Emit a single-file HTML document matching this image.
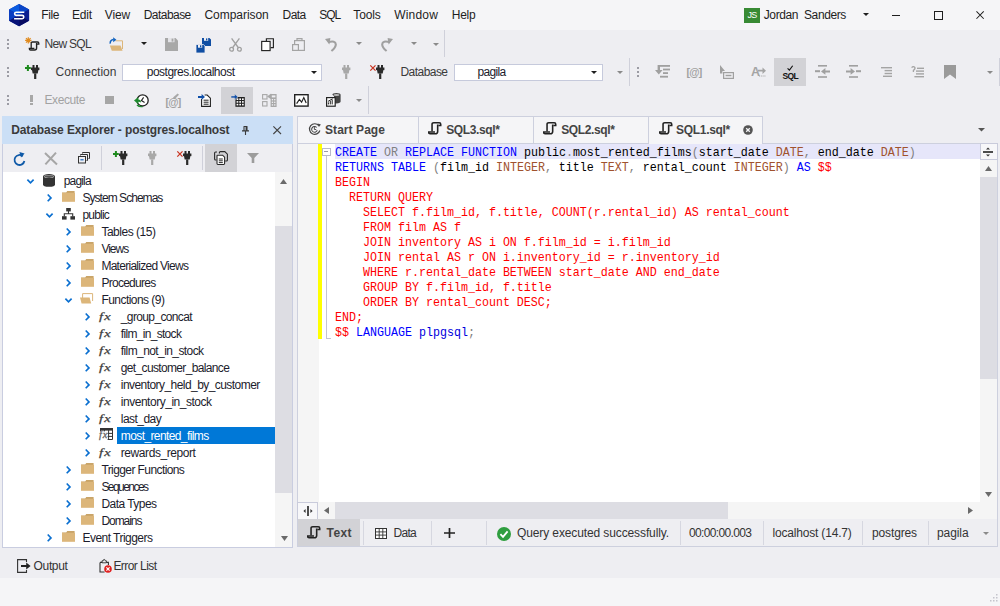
<!DOCTYPE html>
<html><head><meta charset="utf-8"><title>dbForge Studio</title>
<style>
*{box-sizing:border-box;margin:0;padding:0}
html,body{width:1000px;height:606px;overflow:hidden;background:#eeeef2;font-family:"Liberation Sans",sans-serif;font-size:12px;color:#1e1e1e}
.abs{position:absolute}
.t{position:absolute;white-space:pre;line-height:16px;height:16px;font-size:12px;color:#1e1e1e}
svg{position:absolute;overflow:visible}
.grip i{position:absolute;left:0;width:2px;height:2px;background:#9c9ca4}
.grip{position:absolute;width:2px;height:10px}
.grip i:nth-child(1){top:0}.grip i:nth-child(2){top:4px}.grip i:nth-child(3){top:8px}
.vsep{position:absolute;width:1px;background:#cfd0da}
.code{position:absolute;left:335px;font-family:"Liberation Mono",monospace;font-size:11.67px;white-space:pre;line-height:15px;height:15px;color:#000;transform:scaleY(1.1);transform-origin:0 10.6px}
.k{color:#0000ff}.k2{color:#0000dd}.g{color:#808080}.r{color:#ff0000}.ty{color:#a0522d}
.m{color:#1e1e1e}
.gt{color:#9b9b9b}
.tr{color:#1c1c2c}
</style></head><body>
<!-- TITLE / MENU -->
<div class="abs" style="left:0;top:0;width:1000px;height:30px;background:#f5f5f7"></div>
<svg style="left:9px;top:3.7px" width="20.2" height="22.2" viewBox="0 0 20 22.2">
 <path d="M10 0L20 5.5V16.7L10 22.2L0 16.7V5.5Z" fill="#0a2ea8"/>
 <path d="M10 0L0 5.5L10 11.1Z" fill="#0b5be0"/><path d="M10 0L20 5.5L10 11.1Z" fill="#0a46c8"/>
 <path d="M0 5.5V16.7L10 11.1Z" fill="#0a3ec2"/><path d="M20 5.5V16.7L10 11.1Z" fill="#0c1e90"/>
 <path d="M0 16.7L10 22.2V11.1Z" fill="#0a1478"/><path d="M20 16.7L10 22.2V11.1Z" fill="#080c62"/>
 <path d="M15.2 8.2H7.2Q5.5 8.2 5.5 9.8Q5.5 11.4 7.2 11.4H13Q14.7 11.4 14.7 13Q14.7 14.7 13 14.7H5" fill="none" stroke="#fff" stroke-width="1.6"/>
</svg>
<span class="t" style="left:41.25px;top:6.84px;letter-spacing:-0.398px;">File</span>
<span class="t" style="left:72.00px;top:6.84px;letter-spacing:-0.234px;">Edit</span>
<span class="t" style="left:104.80px;top:6.84px;letter-spacing:-0.149px;">View</span>
<span class="t" style="left:143.75px;top:6.84px;letter-spacing:-0.547px;">Database</span>
<span class="t" style="left:204.50px;top:6.84px;letter-spacing:-0.045px;">Comparison</span>
<span class="t" style="left:282.50px;top:6.84px;letter-spacing:-0.527px;">Data</span>
<span class="t" style="left:319.25px;top:6.84px;letter-spacing:-1.089px;">SQL</span>
<span class="t" style="left:353.25px;top:6.84px;letter-spacing:-0.103px;">Tools</span>
<span class="t" style="left:394.25px;top:6.84px;letter-spacing:0.177px;">Window</span>
<span class="t" style="left:451.75px;top:6.84px;letter-spacing:-0.234px;">Help</span>
<div class="abs" style="left:744px;top:7.5px;width:16px;height:15.5px;background:#388a34"></div>
<span class="t" style="left:747.50px;top:7.38px;letter-spacing:-0.758px;font-size:9px;color:#fff">JS</span>
<span class="t" style="left:763.75px;top:6.84px;letter-spacing:-0.388px;">Jordan&nbsp; Sanders</span>
<svg style="left:862.5px;top:13px" width="6" height="3" viewBox="0 0 6 3"><path d="M0 0H6L3 3Z" fill="#1e1e1e"/></svg>
<div class="abs" style="left:892px;top:15px;width:8.4px;height:1px;background:#1e1e1e"></div>
<div class="abs" style="left:934px;top:11.2px;width:8.6px;height:8.6px;border:1px solid #1e1e1e"></div>
<svg style="left:976.2px;top:11.3px" width="8.2" height="8.2" viewBox="0 0 9 9"><path d="M0.5 0.5L8.5 8.5M8.5 0.5L0.5 8.5" stroke="#1e1e1e" stroke-width="1.1"/></svg>
<!--TOOLBARS-->
<!-- row1 -->
<div class="grip" style="left:7px;top:38.5px"><i></i><i></i><i></i></div>
<svg style="left:25px;top:37px" width="15" height="14" viewBox="0 0 15 14">
 <g stroke="#e08a1e" stroke-width="1.2"><path d="M3.3 0.2V6.6M0.1 3.4H6.5M1 1.1L5.6 5.7M5.6 1.1L1 5.7"/></g>
 <path d="M6.2 11V6.2Q6.2 5 7.4 5H12.6Q13.8 5 13.8 6.2V7.2H11.8" fill="none" stroke="#222" stroke-width="1.3"/>
 <path d="M11.6 6V11Q11.6 13 9.6 13H5.6Q4.4 13 4.4 11.9V11.4H9.4" fill="none" stroke="#222" stroke-width="1.4"/>
</svg>
<span class="t" style="left:44.50px;top:35.84px;letter-spacing:-0.694px;color:#3a3a3a">New SQL</span>
<svg style="left:109px;top:37px" width="15" height="15" viewBox="0 0 15 15">
 <path d="M6.5 3.8H13.5V12" fill="none" stroke="#dcb67a" stroke-width="1"/>
 <path d="M0.8 8.6H11.5L13.6 13.8H2.8Z" fill="#dcb67a"/>
 <path d="M1.2 6.6Q1 3 4.6 2.6" fill="none" stroke="#1565c0" stroke-width="1.5"/>
 <path d="M4.2 0.2L7.4 2.7L4.2 5.2Z" fill="#1565c0"/>
</svg>
<svg style="left:141px;top:42px" width="6" height="3" viewBox="0 0 6 3"><path d="M0 0H6L3 3Z" fill="#1e1e1e"/></svg>
<svg style="left:164.5px;top:38px" width="13" height="13" viewBox="0 0 13 13">
 <path d="M0 0H10.5L13 2.5V13H0Z" fill="#a8a8a8"/><rect x="3" y="0" width="6.5" height="4.2" fill="#e4e4e8"/><rect x="6.6" y="0.6" width="1.8" height="3" fill="#a8a8a8"/>
</svg>
<svg style="left:195.5px;top:37.5px" width="15" height="15" viewBox="0 0 15 15">
 <path d="M6 0H13.4L15 1.6V8H6Z" fill="#0f4ea3"/><rect x="8" y="0" width="4.2" height="2.8" fill="#eeeef2"/><rect x="10" y="0.4" width="1.3" height="2" fill="#0f4ea3"/>
 <path d="M0 6.5H7.4L9 8.1V15H0Z" fill="#0f4ea3" stroke="#eeeef2" stroke-width="0.8"/><rect x="2" y="6.9" width="4.2" height="2.8" fill="#eeeef2"/><rect x="4" y="7.3" width="1.3" height="2" fill="#0f4ea3"/>
</svg>
<svg style="left:228.5px;top:37.5px" width="13" height="14" viewBox="0 0 13 14">
 <g fill="none" stroke="#a0a0a0" stroke-width="1.3"><path d="M2.6 0.3L9.6 10M10.4 0.3L3.4 10"/><circle cx="2.6" cy="11.3" r="1.9"/><circle cx="10.4" cy="11.3" r="1.9"/></g>
</svg>
<svg style="left:260.5px;top:37.5px" width="13" height="13" viewBox="0 0 13 13">
 <g fill="none" stroke="#222" stroke-width="1.15"><path d="M5.4 3V0.7H12.4V9.6H9.6"/><rect x="0.7" y="3.4" width="8.4" height="9.2" fill="#fff"/></g>
</svg>
<svg style="left:291.5px;top:37.5px" width="13" height="13" viewBox="0 0 13 13">
 <g fill="none" stroke="#a4a4a4" stroke-width="1.2"><rect x="2.6" y="2.6" width="9.8" height="9.8"/><path d="M5 2.6V0.6H10V2.6"/><rect x="0.6" y="6.6" width="5.8" height="5.8" fill="#eeeef2"/></g>
</svg>
<svg style="left:324.5px;top:37.5px" width="13" height="14" viewBox="0 0 13 14">
 <path d="M3 4.2Q10.6 2 10.8 6.4Q10.8 9.4 6.4 13" fill="none" stroke="#a0a0a0" stroke-width="2.1"/><path d="M0 1L5.4 0L4.4 6.4Z" fill="#a0a0a0"/>
</svg>
<svg style="left:356px;top:42px" width="6" height="3" viewBox="0 0 6 3"><path d="M0 0H6L3 3Z" fill="#8a8a8a"/></svg>
<svg style="left:380px;top:37.5px" width="13" height="14" viewBox="0 0 13 14">
 <path d="M10 4.2Q2.4 2 2.2 6.4Q2.2 9.4 6.6 13" fill="none" stroke="#a0a0a0" stroke-width="2.1"/><path d="M13 1L7.6 0L8.6 6.4Z" fill="#a0a0a0"/>
</svg>
<svg style="left:411px;top:42px" width="6" height="3" viewBox="0 0 6 3"><path d="M0 0H6L3 3Z" fill="#8a8a8a"/></svg>
<svg style="left:432.5px;top:43px" width="6" height="3" viewBox="0 0 6 3"><path d="M0 0H6L3 3Z" fill="#8a8a8a"/></svg>
<div class="vsep" style="left:444px;top:30px;height:27px"></div>
<!-- row2 -->
<div class="grip" style="left:7px;top:66.5px"><i></i><i></i><i></i></div>
<svg style="left:25px;top:64.7px" width="6" height="6" viewBox="0 0 6 6"><path d="M2.9 0.1V5.9M0 3H5.8" stroke="#1e8a1e" stroke-width="2"/></svg><svg style="left:31.2px;top:64.6px" width="9" height="14" viewBox="0 0 9 14"><g fill="#2a2a2a"><rect x="1.5" y="0" width="2" height="3"/><rect x="5" y="0" width="2" height="3"/><rect x="0" y="2.5" width="8.4" height="2.6"/><path d="M1 5H7.4L6.7 8.6H1.7Z"/><rect x="3.1" y="8.4" width="2.2" height="5.6"/></g></svg>
<span class="t" style="left:55.50px;top:63.84px;letter-spacing:0.028px;color:#3a3a3a">Connection</span>
<div class="abs" style="left:122px;top:63.5px;width:199.5px;height:17px;background:#fff;border:1px solid #c6cadc"></div>
<span class="t" style="left:146.75px;top:63.84px;letter-spacing:-0.499px;color:#1c1c2c">postgres.localhost</span>
<svg style="left:310.5px;top:71px" width="6" height="3" viewBox="0 0 6 3"><path d="M0 0H6L3 3Z" fill="#1e1e1e"/></svg>
<svg style="left:341.6px;top:64.6px" width="9" height="14" viewBox="0 0 9 14"><g fill="#a8a8a8"><rect x="1.5" y="0" width="2" height="3"/><rect x="5" y="0" width="2" height="3"/><rect x="0" y="2.5" width="8.4" height="2.6"/><path d="M1 5H7.4L6.7 8.6H1.7Z"/><rect x="3.1" y="8.4" width="2.2" height="5.6"/></g></svg>
<svg style="left:369.5px;top:64.8px" width="6" height="6" viewBox="0 0 6 6"><path d="M0.3 0.3L5.5 5.7M5.5 0.3L0.3 5.7" stroke="#c8321e" stroke-width="1.2"/></svg><svg style="left:376px;top:64.6px" width="9" height="14" viewBox="0 0 9 14"><g fill="#2a2a2a"><rect x="1.5" y="0" width="2" height="3"/><rect x="5" y="0" width="2" height="3"/><rect x="0" y="2.5" width="8.4" height="2.6"/><path d="M1 5H7.4L6.7 8.6H1.7Z"/><rect x="3.1" y="8.4" width="2.2" height="5.6"/></g></svg>
<span class="t" style="left:400.50px;top:63.84px;letter-spacing:-0.547px;color:#3a3a3a">Database</span>
<div class="abs" style="left:453.5px;top:63.5px;width:149.5px;height:17px;background:#fff;border:1px solid #c6cadc"></div>
<span class="t" style="left:477.50px;top:63.84px;letter-spacing:-0.672px;color:#1c1c2c">pagila</span>
<svg style="left:591px;top:71px" width="6" height="3" viewBox="0 0 6 3"><path d="M0 0H6L3 3Z" fill="#1e1e1e"/></svg>
<svg style="left:617px;top:70.5px" width="6" height="3" viewBox="0 0 6 3"><path d="M0 0H6L3 3Z" fill="#8a8a8a"/></svg>
<div class="vsep" style="left:629px;top:58px;height:28px"></div>
<div class="grip" style="left:637px;top:66.5px"><i></i><i></i><i></i></div>
<!-- row2 right icons -->
<svg style="left:654.5px;top:65px" width="15" height="13" viewBox="0 0 15 13">
 <g fill="#a0a0a0"><rect x="5" y="0" width="10" height="1.8"/><rect x="8" y="3.6" width="7" height="1.8"/><rect x="8" y="7.2" width="5" height="1.8"/><rect x="5" y="10.8" width="8" height="1.8"/><path d="M2.6 0H5V5H7.6L3.8 9.6L0 5H2.6Z"/></g>
</svg>
<span class="t" style="left:686.50px;top:64.36px;letter-spacing:-0.745px;font-size:10.5px;font-weight:bold;color:#a0a0a0">[@]</span>
<svg style="left:719.5px;top:64.5px" width="14" height="14" viewBox="0 0 14 14">
 <path d="M0 0L5 6H2.4V8.6H0Z" fill="#a0a0a0"/><rect x="3.6" y="7.6" width="9.8" height="5.8" fill="none" stroke="#a0a0a0" stroke-width="1.2"/><rect x="5.6" y="9.8" width="5.8" height="1.4" fill="#a0a0a0"/>
</svg>
<span class="t" style="left:751.00px;top:64.27px;letter-spacing:-1.031px;font-size:12.5px;font-weight:bold;color:#a4a4a4">A</span>
<svg style="left:758px;top:67px" width="8" height="10" viewBox="0 0 8 10"><path d="M0 2.8H4.5V0.5L8 3.7L4.5 6.9V4.6H0Z" fill="#a4a4a4"/><path d="M1 9H8" stroke="#a4a4a4" stroke-width="1" stroke-dasharray="1.2 1"/></svg>
<div class="abs" style="left:774px;top:58px;width:32px;height:27.5px;background:#d2d2d6"></div>
<svg style="left:787px;top:64.6px" width="6.4" height="6" viewBox="0 0 9 8"><path d="M0.8 4.4L3.4 7L8 0.8" fill="none" stroke="#111" stroke-width="1.6"/></svg>
<span class="t" style="left:782.50px;top:68.25px;letter-spacing:-0.661px;font-size:8.5px;font-weight:bold;color:#111">SQL</span>
<svg style="left:814.5px;top:65px" width="15" height="13" viewBox="0 0 15 13">
 <g fill="#a0a0a0"><rect x="3" y="0" width="9" height="1.6"/><rect x="3" y="11.2" width="9" height="1.6"/><rect x="0" y="5.2" width="5" height="2"/><path d="M15 5.4H10.4V3L6 6.4L10.4 9.8V7.4H15Z"/></g>
</svg>
<svg style="left:846px;top:65px" width="15" height="13" viewBox="0 0 15 13">
 <g fill="#a0a0a0"><rect x="3" y="0" width="9" height="1.6"/><rect x="3" y="11.2" width="9" height="1.6"/><rect x="10" y="5.2" width="5" height="2"/><path d="M0 5.4H4.6V3L9 6.4L4.6 9.8V7.4H0Z"/></g>
</svg>
<svg style="left:880.5px;top:66.5px" width="11" height="10" viewBox="0 0 11 10">
 <g fill="#a4a4a4"><rect x="0" y="0" width="11" height="1.4"/><rect x="3.6" y="2.9" width="7.4" height="1.4"/><rect x="3.6" y="5.8" width="7.4" height="1.4"/><rect x="2" y="8.6" width="9" height="1.4"/></g>
</svg>
<svg style="left:911px;top:65.5px" width="13" height="12" viewBox="0 0 13 12">
 <g fill="#a4a4a4"><rect x="6" y="1.6" width="7" height="1.4"/><rect x="5" y="4.4" width="8" height="1.4"/><rect x="5" y="7.2" width="8" height="1.4"/><rect x="3.4" y="10" width="9.6" height="1.4"/></g>
 <path d="M0.6 1.6Q2.4 -0.4 3.8 1.4Q4.6 3 2.4 4.4V6" fill="none" stroke="#a4a4a4" stroke-width="1.3"/>
</svg>
<svg style="left:943.5px;top:64.5px" width="12" height="14" viewBox="0 0 12 14"><path d="M0 0H12V14L6 9.4L0 14Z" fill="#9a9a9a"/></svg>
<svg style="left:987px;top:71px" width="6" height="3" viewBox="0 0 6 3"><path d="M0 0H6L3 3Z" fill="#8a8a8a"/></svg>
<div class="vsep" style="left:999px;top:58px;height:28px"></div>
<!-- row3 -->
<div class="grip" style="left:7px;top:94.5px"><i></i><i></i><i></i></div>
<div class="abs" style="left:30px;top:94.5px;width:2.5px;height:7px;background:#a8a8a8"></div>
<div class="abs" style="left:30px;top:103px;width:2.5px;height:2.2px;background:#a8a8a8"></div>
<span class="t" style="left:44.50px;top:91.84px;letter-spacing:-0.408px;color:#a2a2a2">Execute</span>
<div class="abs" style="left:104.5px;top:95.5px;width:9px;height:8.5px;background:#a6a6a6"></div>
<svg style="left:133.5px;top:93.5px" width="15" height="13" viewBox="0 0 15 13">
 <circle cx="8.6" cy="6.4" r="5.6" fill="#fff" stroke="#222" stroke-width="1.3"/>
 <path d="M9.6 3.4L7.4 6.6L10.6 8.4" fill="none" stroke="#222" stroke-width="1.1"/>
 <path d="M0 6.6L4.4 3V5.4Q7 5.4 7 8.4Q6 7.8 4.4 7.8V10.2Z" fill="#1e8a2e"/>
 <path d="M3 11Q5 13 8.6 12.6" fill="none" stroke="#1e8a2e" stroke-width="1.4"/>
</svg>
<svg style="left:165.5px;top:93px" width="15" height="13" viewBox="0 0 15 13">
 <path d="M7 4.6L11.6 0.4L13 1.8L8.6 6.2Z" fill="#a8a8a8"/>
</svg>
<span class="t" style="left:165.50px;top:93.86px;letter-spacing:-0.745px;font-size:10.5px;font-weight:bold;color:#a0a0a0">[@]</span>
<svg style="left:197.5px;top:93.5px" width="13" height="13" viewBox="0 0 13 13">
 <path d="M3.6 5V12.4H12.4V4.2L9.2 1H6.6" fill="#fff" stroke="#222" stroke-width="1.1"/>
 <path d="M5.6 6.2H10.6M5.6 8.2H10.6M5.6 10.2H10.6" stroke="#222" stroke-width="1"/>
 <path d="M0 1.9H3.6V0L7 2.9L3.6 5.8V3.9H0Z" fill="#0f4fa8"/>
</svg>
<div class="abs" style="left:221px;top:86.5px;width:32px;height:27px;background:#d2d2d6"></div>
<svg style="left:230.5px;top:93.5px" width="14" height="13" viewBox="0 0 14 13">
 <rect x="4.4" y="3" width="9.4" height="9.8" fill="#222"/>
 <g fill="#fff"><rect x="5.6" y="4.4" width="1.7" height="1.6"/><rect x="8.3" y="4.4" width="1.7" height="1.6"/><rect x="11" y="4.4" width="1.7" height="1.6"/><rect x="5.6" y="7.1" width="1.7" height="1.6"/><rect x="8.3" y="7.1" width="1.7" height="1.6"/><rect x="11" y="7.1" width="1.7" height="1.6"/><rect x="5.6" y="9.8" width="1.7" height="1.6"/><rect x="8.3" y="9.8" width="1.7" height="1.6"/><rect x="11" y="9.8" width="1.7" height="1.6"/></g>
 <path d="M0 1.9H3.6V0L7 2.9L3.6 5.8V3.9H0Z" fill="#0f4fa8" stroke="#d2d2d6" stroke-width="0.6"/>
</svg>
<svg style="left:261.5px;top:93.5px" width="15" height="13" viewBox="0 0 15 13">
 <g fill="none" stroke="#a8a8a8" stroke-width="1.1"><rect x="0.6" y="0.6" width="4.4" height="4.4"/><rect x="0.6" y="7.6" width="4.4" height="4.4"/><path d="M6 2.4L8.6 0.6V4.2Z" fill="#a8a8a8"/></g>
 <rect x="8.6" y="0" width="6" height="13" fill="#a8a8a8"/><g fill="#eeeef2"><rect x="9.8" y="1.4" width="3.6" height="2"/><rect x="9.8" y="5" width="1.3" height="1.4"/><rect x="12.1" y="5" width="1.3" height="1.4"/><rect x="9.8" y="7.6" width="1.3" height="1.4"/><rect x="12.1" y="7.6" width="1.3" height="1.4"/><rect x="9.8" y="10.2" width="1.3" height="1.4"/><rect x="12.1" y="10.2" width="1.3" height="1.4"/></g>
</svg>
<svg style="left:293.5px;top:93.5px" width="15" height="13" viewBox="0 0 15 13">
 <rect x="0.7" y="0.7" width="13.4" height="11.4" fill="#fff" stroke="#222" stroke-width="1.4"/>
 <path d="M2.6 9.6L5.4 5.4L7.6 8.2L9.8 3.6L12.2 9" fill="none" stroke="#222" stroke-width="1.2"/>
</svg>
<svg style="left:325.5px;top:93px" width="15" height="14" viewBox="0 0 15 14">
 <path d="M6.4 1.8Q6.4 0 10.4 0Q14.6 0 14.6 1.8V8.6Q14.6 10.4 10.4 10.4Q9 10.4 8 10V3Z" fill="#444"/>
 <ellipse cx="10.5" cy="1.9" rx="3" ry="1" fill="#bbb"/>
 <rect x="0.6" y="4.6" width="8.6" height="8.6" fill="#fff" stroke="#222" stroke-width="1.2"/>
 <path d="M2.4 11.4V9.4M4.3 11.4V8M6.2 11.4V6.6M2 8.4L6.6 5.8" stroke="#222" stroke-width="1"/>
</svg>
<svg style="left:356px;top:98.5px" width="6" height="3" viewBox="0 0 6 3"><path d="M0 0H6L3 3Z" fill="#8a8a8a"/></svg>
<div class="vsep" style="left:368px;top:86px;height:28px"></div>
<!--/TOOLBARS-->
<!--PANEL-->
<div class="abs" style="left:2px;top:117px;width:291px;height:431px;background:#fff;border:1px solid #c9cde0;border-top:none"></div>
<div class="abs" style="left:2px;top:116px;width:291px;height:28px;background:#cbdff6"></div>
<span class="t" style="left:11.25px;top:121.84px;letter-spacing:-0.118px;font-weight:bold;color:#3a3a3a">Database Explorer - postgres.localhost</span>
<svg style="left:242px;top:126px" width="7" height="9" viewBox="0 0 7 9"><path d="M1.6 0.5H5.4M2 0.5V4.6M5 0.5V4.6M0 4.9H7M3.5 5V9" stroke="#3a3a3a" stroke-width="1.1" fill="none"/><rect x="3.6" y="0.5" width="1.4" height="4.2" fill="#3a3a3a"/></svg>
<svg style="left:272.6px;top:126px" width="8.4" height="8.4" viewBox="0 0 9 9"><path d="M0.4 0.4L8.6 8.6M8.6 0.4L0.4 8.6" stroke="#444" stroke-width="1.2"/></svg>
<div class="abs" style="left:3px;top:144px;width:289px;height:28px;background:#eeeef2"></div>
<svg style="left:12.5px;top:152px" width="13" height="14" viewBox="0 0 13 14"><path d="M9.8 4.2A5 5 0 1 0 11.4 9" fill="none" stroke="#0f5aa8" stroke-width="1.8"/><path d="M6.4 0L11.6 1.6L8 5.6Z" fill="#0f5aa8"/></svg>
<svg style="left:43.5px;top:152px" width="14" height="13" viewBox="0 0 14 13"><path d="M1 1L13 12.4M12 0.6L1.4 12.4" stroke="#a6a6a6" stroke-width="2"/></svg>
<svg style="left:78px;top:152px" width="12" height="12" viewBox="0 0 12 12"><g fill="none" stroke="#333" stroke-width="1"><path d="M4.5 1.5V0.5H11.5V6.5H10.5"/><path d="M2.5 3.5V2.5H9.5V8.5H8.5"/><rect x="0.5" y="4.5" width="7" height="6.5"/></g><rect x="2.4" y="7.2" width="3.2" height="1.2" fill="#1565c0"/></svg>
<div class="vsep" style="left:100.8px;top:146px;height:23.5px"></div>
<svg style="left:113px;top:151.2px" width="6" height="6" viewBox="0 0 6 6"><path d="M2.9 0.1V5.9M0 3H5.8" stroke="#1e8a1e" stroke-width="2"/></svg><svg style="left:119px;top:151px" width="9" height="14" viewBox="0 0 9 14"><g fill="#2a2a2a"><rect x="1.5" y="0" width="2" height="3"/><rect x="5" y="0" width="2" height="3"/><rect x="0" y="2.5" width="8.4" height="2.6"/><path d="M1 5H7.4L6.7 8.6H1.7Z"/><rect x="3.1" y="8.4" width="2.2" height="5.6"/></g></svg><svg style="left:147.5px;top:151px" width="9" height="14" viewBox="0 0 9 14"><g fill="#a8a8a8"><rect x="1.5" y="0" width="2" height="3"/><rect x="5" y="0" width="2" height="3"/><rect x="0" y="2.5" width="8.4" height="2.6"/><path d="M1 5H7.4L6.7 8.6H1.7Z"/><rect x="3.1" y="8.4" width="2.2" height="5.6"/></g></svg><svg style="left:177px;top:151.2px" width="6" height="6" viewBox="0 0 6 6"><path d="M0.3 0.3L5.5 5.7M5.5 0.3L0.3 5.7" stroke="#c8321e" stroke-width="1.2"/></svg><svg style="left:183px;top:151px" width="9" height="14" viewBox="0 0 9 14"><g fill="#2a2a2a"><rect x="1.5" y="0" width="2" height="3"/><rect x="5" y="0" width="2" height="3"/><rect x="0" y="2.5" width="8.4" height="2.6"/><path d="M1 5H7.4L6.7 8.6H1.7Z"/><rect x="3.1" y="8.4" width="2.2" height="5.6"/></g></svg>
<div class="vsep" style="left:201.7px;top:146px;height:23.5px"></div>
<div class="abs" style="left:205px;top:144px;width:32px;height:28px;background:#d2d2d6"></div>
<svg style="left:214.2px;top:151px" width="14" height="14" viewBox="0 0 14 14"><g fill="none" stroke="#2a2a2a" stroke-width="1.1"><path d="M3 1H1.6Q0.6 1 0.6 2V8Q0.6 9 1.6 9H2.4"/><path d="M5.4 2.6V1.6Q5.4 0.6 6.4 0.6H10.8L13.4 3.2V9Q13.4 10 12.4 10H11.2"/><path d="M3.6 4.2H8.6L10.6 6.2V12.6Q10.6 13.5 9.7 13.5H3.9Q3 13.5 3 12.6V4.8Q3 4.2 3.6 4.2Z" fill="#fff"/><path d="M4.8 8H8.8M4.8 9.8H8.8M4.8 11.6H8.8" stroke-width="1"/></g></svg>
<svg style="left:247px;top:153.2px" width="12" height="10" viewBox="0 0 12 10"><path d="M0 0H12L7.3 5V10H4.7V5Z" fill="#9c9c9c"/></svg>
<div class="abs" style="left:275px;top:172px;width:17px;height:375px;background:#f5f5f5"></div>
<div class="abs" style="left:275px;top:226px;width:17px;height:267px;background:#dddde3"></div>
<svg style="left:280px;top:178.5px" width="7" height="5" viewBox="0 0 7 5"><path d="M3.5 0L7 5H0Z" fill="#6a6a6a"/></svg>
<svg style="left:280.5px;top:535.5px" width="7" height="5" viewBox="0 0 7 5"><path d="M3.5 5L7 0H0Z" fill="#6a6a6a"/></svg>
<svg style="left:26.7px;top:179.2px" width="7" height="5" viewBox="0 0 7 5"><path d="M0.4 0.6L3.5 3.8L6.6 0.6" fill="none" stroke="#0a6fd0" stroke-width="1.65"/></svg>
<svg style="left:42.75px;top:173.6px" width="12" height="13" viewBox="0 0 12 13"><path d="M0 2.4V10.4Q0 12.8 6 12.8Q12 12.8 12 10.4V2.4Z" fill="#333"/><ellipse cx="6" cy="2.5" rx="6" ry="2.4" fill="#333"/><ellipse cx="6" cy="2.5" rx="4.8" ry="1.5" fill="#fff"/><ellipse cx="6" cy="2.6" rx="4.6" ry="1.3" fill="#555"/></svg>
<span class="t" style="left:63.75px;top:172.54px;letter-spacing:-0.839px;color:#1c1c2c">pagila</span>
<svg style="left:46.6px;top:194.2px" width="5" height="8" viewBox="0 0 5 8"><path d="M0.7 0.5L4 3.9L0.7 7.3" fill="none" stroke="#0a6fd0" stroke-width="1.65"/></svg>
<svg style="left:61.8px;top:191px" width="13" height="11" viewBox="0 0 13 11"><path d="M0 1.6H4.2L5.2 0H12.6V2.2H0Z" fill="#c9a468"/><rect x="0" y="1.8" width="13" height="9" fill="#dcb67a"/></svg>
<span class="t" style="left:82.50px;top:189.54px;letter-spacing:-0.962px;color:#1c1c2c">System Schemas</span>
<svg style="left:46.2px;top:213.2px" width="7" height="5" viewBox="0 0 7 5"><path d="M0.4 0.6L3.5 3.8L6.6 0.6" fill="none" stroke="#0a6fd0" stroke-width="1.65"/></svg>
<svg style="left:62.199999999999996px;top:208.2px" width="13" height="12" viewBox="0 0 13 12"><g fill="#333"><rect x="4.2" y="0" width="4.6" height="3.4"/><rect x="0" y="8.2" width="4.6" height="3.4"/><rect x="8.4" y="8.2" width="4.6" height="3.4"/></g><path d="M6.5 3V5.8M2.3 8.4V5.8H10.7V8.4" fill="none" stroke="#333" stroke-width="1.1"/></svg>
<span class="t" style="left:82.50px;top:206.54px;letter-spacing:-0.810px;color:#1c1c2c">public</span>
<svg style="left:65.6px;top:228.2px" width="5" height="8" viewBox="0 0 5 8"><path d="M0.7 0.5L4 3.9L0.7 7.3" fill="none" stroke="#0a6fd0" stroke-width="1.65"/></svg>
<svg style="left:80.8px;top:225px" width="13" height="11" viewBox="0 0 13 11"><path d="M0 1.6H4.2L5.2 0H12.6V2.2H0Z" fill="#c9a468"/><rect x="0" y="1.8" width="13" height="9" fill="#dcb67a"/></svg>
<span class="t" style="left:101.40px;top:223.54px;letter-spacing:-0.480px;color:#1c1c2c">Tables (15)</span>
<svg style="left:65.6px;top:245.2px" width="5" height="8" viewBox="0 0 5 8"><path d="M0.7 0.5L4 3.9L0.7 7.3" fill="none" stroke="#0a6fd0" stroke-width="1.65"/></svg>
<svg style="left:80.8px;top:242px" width="13" height="11" viewBox="0 0 13 11"><path d="M0 1.6H4.2L5.2 0H12.6V2.2H0Z" fill="#c9a468"/><rect x="0" y="1.8" width="13" height="9" fill="#dcb67a"/></svg>
<span class="t" style="left:101.40px;top:240.54px;letter-spacing:-0.999px;color:#1c1c2c">Views</span>
<svg style="left:65.6px;top:262.2px" width="5" height="8" viewBox="0 0 5 8"><path d="M0.7 0.5L4 3.9L0.7 7.3" fill="none" stroke="#0a6fd0" stroke-width="1.65"/></svg>
<svg style="left:80.8px;top:259px" width="13" height="11" viewBox="0 0 13 11"><path d="M0 1.6H4.2L5.2 0H12.6V2.2H0Z" fill="#c9a468"/><rect x="0" y="1.8" width="13" height="9" fill="#dcb67a"/></svg>
<span class="t" style="left:101.40px;top:257.54px;letter-spacing:-0.724px;color:#1c1c2c">Materialized Views</span>
<svg style="left:65.6px;top:279.2px" width="5" height="8" viewBox="0 0 5 8"><path d="M0.7 0.5L4 3.9L0.7 7.3" fill="none" stroke="#0a6fd0" stroke-width="1.65"/></svg>
<svg style="left:80.8px;top:276px" width="13" height="11" viewBox="0 0 13 11"><path d="M0 1.6H4.2L5.2 0H12.6V2.2H0Z" fill="#c9a468"/><rect x="0" y="1.8" width="13" height="9" fill="#dcb67a"/></svg>
<span class="t" style="left:101.40px;top:274.54px;letter-spacing:-0.728px;color:#1c1c2c">Procedures</span>
<svg style="left:65.2px;top:298.2px" width="7" height="5" viewBox="0 0 7 5"><path d="M0.4 0.6L3.5 3.8L6.6 0.6" fill="none" stroke="#0a6fd0" stroke-width="1.65"/></svg>
<svg style="left:80.39999999999999px;top:293px" width="14" height="11" viewBox="0 0 14 11"><path d="M2.6 10V0.6H12.6V8" fill="none" stroke="#dcb67a" stroke-width="1"/><path d="M0 4.4H9.6L11.2 10.6H1.6Z" fill="#dcb67a"/></svg>
<span class="t" style="left:101.40px;top:291.54px;letter-spacing:-0.541px;color:#1c1c2c">Functions (9)</span>
<svg style="left:85.1px;top:313.2px" width="5" height="8" viewBox="0 0 5 8"><path d="M0.7 0.5L4 3.9L0.7 7.3" fill="none" stroke="#0a6fd0" stroke-width="1.65"/></svg>
<span class="t" style="left:99.0px;top:307.6px;font-family:'Liberation Serif',serif;font-style:italic;font-size:11px;letter-spacing:1px;transform:scaleX(1.32);transform-origin:0 0;color:#3c3c3c;-webkit-text-stroke:0.25px #3c3c3c">fx</span>
<span class="t" style="left:120.80px;top:308.54px;letter-spacing:-0.631px;color:#1c1c2c">_group_concat</span>
<svg style="left:85.1px;top:330.2px" width="5" height="8" viewBox="0 0 5 8"><path d="M0.7 0.5L4 3.9L0.7 7.3" fill="none" stroke="#0a6fd0" stroke-width="1.65"/></svg>
<span class="t" style="left:99.0px;top:324.6px;font-family:'Liberation Serif',serif;font-style:italic;font-size:11px;letter-spacing:1px;transform:scaleX(1.32);transform-origin:0 0;color:#3c3c3c;-webkit-text-stroke:0.25px #3c3c3c">fx</span>
<span class="t" style="left:120.80px;top:325.54px;letter-spacing:-0.689px;color:#1c1c2c">film_in_stock</span>
<svg style="left:85.1px;top:347.2px" width="5" height="8" viewBox="0 0 5 8"><path d="M0.7 0.5L4 3.9L0.7 7.3" fill="none" stroke="#0a6fd0" stroke-width="1.65"/></svg>
<span class="t" style="left:99.0px;top:341.6px;font-family:'Liberation Serif',serif;font-style:italic;font-size:11px;letter-spacing:1px;transform:scaleX(1.32);transform-origin:0 0;color:#3c3c3c;-webkit-text-stroke:0.25px #3c3c3c">fx</span>
<span class="t" style="left:120.80px;top:342.54px;letter-spacing:-0.589px;color:#1c1c2c">film_not_in_stock</span>
<svg style="left:85.1px;top:364.2px" width="5" height="8" viewBox="0 0 5 8"><path d="M0.7 0.5L4 3.9L0.7 7.3" fill="none" stroke="#0a6fd0" stroke-width="1.65"/></svg>
<span class="t" style="left:99.0px;top:358.6px;font-family:'Liberation Serif',serif;font-style:italic;font-size:11px;letter-spacing:1px;transform:scaleX(1.32);transform-origin:0 0;color:#3c3c3c;-webkit-text-stroke:0.25px #3c3c3c">fx</span>
<span class="t" style="left:120.80px;top:359.54px;letter-spacing:-0.651px;color:#1c1c2c">get_customer_balance</span>
<svg style="left:85.1px;top:381.2px" width="5" height="8" viewBox="0 0 5 8"><path d="M0.7 0.5L4 3.9L0.7 7.3" fill="none" stroke="#0a6fd0" stroke-width="1.65"/></svg>
<span class="t" style="left:99.0px;top:375.6px;font-family:'Liberation Serif',serif;font-style:italic;font-size:11px;letter-spacing:1px;transform:scaleX(1.32);transform-origin:0 0;color:#3c3c3c;-webkit-text-stroke:0.25px #3c3c3c">fx</span>
<span class="t" style="left:120.80px;top:376.54px;letter-spacing:-0.559px;color:#1c1c2c">inventory_held_by_customer</span>
<svg style="left:85.1px;top:398.2px" width="5" height="8" viewBox="0 0 5 8"><path d="M0.7 0.5L4 3.9L0.7 7.3" fill="none" stroke="#0a6fd0" stroke-width="1.65"/></svg>
<span class="t" style="left:99.0px;top:392.6px;font-family:'Liberation Serif',serif;font-style:italic;font-size:11px;letter-spacing:1px;transform:scaleX(1.32);transform-origin:0 0;color:#3c3c3c;-webkit-text-stroke:0.25px #3c3c3c">fx</span>
<span class="t" style="left:120.80px;top:393.54px;letter-spacing:-0.477px;color:#1c1c2c">inventory_in_stock</span>
<svg style="left:85.1px;top:415.2px" width="5" height="8" viewBox="0 0 5 8"><path d="M0.7 0.5L4 3.9L0.7 7.3" fill="none" stroke="#0a6fd0" stroke-width="1.65"/></svg>
<span class="t" style="left:99.0px;top:409.6px;font-family:'Liberation Serif',serif;font-style:italic;font-size:11px;letter-spacing:1px;transform:scaleX(1.32);transform-origin:0 0;color:#3c3c3c;-webkit-text-stroke:0.25px #3c3c3c">fx</span>
<span class="t" style="left:120.80px;top:410.54px;letter-spacing:-0.550px;color:#1c1c2c">last_day</span>
<div class="abs" style="left:117px;top:427px;width:158.3px;height:17px;background:#0078d7"></div>
<svg style="left:85.1px;top:432.2px" width="5" height="8" viewBox="0 0 5 8"><path d="M0.7 0.5L4 3.9L0.7 7.3" fill="none" stroke="#0a6fd0" stroke-width="1.65"/></svg>
<svg style="left:99.6px;top:428.4px" width="13" height="12" viewBox="0 0 13 12"><rect x="0" y="0" width="13" height="2.6" fill="#333"/><g stroke="#333" stroke-width="1" fill="none"><path d="M0.5 2V11.5H12.5V2M0 5.4H13M0 8.4H13M4.4 2V11.5M8.6 2V11.5"/></g><rect x="0" y="3.4" width="7.6" height="8.6" fill="#fff"/></svg>
<span class="t" style="left:99.00px;top:426.96px;letter-spacing:0.811px;font-family:'Liberation Serif',serif;font-style:italic;font-size:10.5px;color:#666;-webkit-text-stroke:0.3px #666">fx</span>
<span class="t" style="left:120.80px;top:427.54px;letter-spacing:-0.603px;color:#fff">most_rented_films</span>
<svg style="left:85.1px;top:449.2px" width="5" height="8" viewBox="0 0 5 8"><path d="M0.7 0.5L4 3.9L0.7 7.3" fill="none" stroke="#0a6fd0" stroke-width="1.65"/></svg>
<span class="t" style="left:99.0px;top:443.6px;font-family:'Liberation Serif',serif;font-style:italic;font-size:11px;letter-spacing:1px;transform:scaleX(1.32);transform-origin:0 0;color:#3c3c3c;-webkit-text-stroke:0.25px #3c3c3c">fx</span>
<span class="t" style="left:120.80px;top:444.54px;letter-spacing:-0.429px;color:#1c1c2c">rewards_report</span>
<svg style="left:65.6px;top:466.2px" width="5" height="8" viewBox="0 0 5 8"><path d="M0.7 0.5L4 3.9L0.7 7.3" fill="none" stroke="#0a6fd0" stroke-width="1.65"/></svg>
<svg style="left:80.8px;top:463px" width="13" height="11" viewBox="0 0 13 11"><path d="M0 1.6H4.2L5.2 0H12.6V2.2H0Z" fill="#c9a468"/><rect x="0" y="1.8" width="13" height="9" fill="#dcb67a"/></svg>
<span class="t" style="left:101.40px;top:461.54px;letter-spacing:-0.590px;color:#1c1c2c">Trigger Functions</span>
<svg style="left:65.6px;top:483.2px" width="5" height="8" viewBox="0 0 5 8"><path d="M0.7 0.5L4 3.9L0.7 7.3" fill="none" stroke="#0a6fd0" stroke-width="1.65"/></svg>
<svg style="left:80.8px;top:480px" width="13" height="11" viewBox="0 0 13 11"><path d="M0 1.6H4.2L5.2 0H12.6V2.2H0Z" fill="#c9a468"/><rect x="0" y="1.8" width="13" height="9" fill="#dcb67a"/></svg>
<span class="t" style="left:101.40px;top:478.54px;letter-spacing:-1.550px;color:#1c1c2c">Sequences</span>
<svg style="left:65.6px;top:500.2px" width="5" height="8" viewBox="0 0 5 8"><path d="M0.7 0.5L4 3.9L0.7 7.3" fill="none" stroke="#0a6fd0" stroke-width="1.65"/></svg>
<svg style="left:80.8px;top:497px" width="13" height="11" viewBox="0 0 13 11"><path d="M0 1.6H4.2L5.2 0H12.6V2.2H0Z" fill="#c9a468"/><rect x="0" y="1.8" width="13" height="9" fill="#dcb67a"/></svg>
<span class="t" style="left:101.40px;top:495.54px;letter-spacing:-0.528px;color:#1c1c2c">Data Types</span>
<svg style="left:65.6px;top:517.2px" width="5" height="8" viewBox="0 0 5 8"><path d="M0.7 0.5L4 3.9L0.7 7.3" fill="none" stroke="#0a6fd0" stroke-width="1.65"/></svg>
<svg style="left:80.8px;top:514px" width="13" height="11" viewBox="0 0 13 11"><path d="M0 1.6H4.2L5.2 0H12.6V2.2H0Z" fill="#c9a468"/><rect x="0" y="1.8" width="13" height="9" fill="#dcb67a"/></svg>
<span class="t" style="left:101.40px;top:512.54px;letter-spacing:-1.051px;color:#1c1c2c">Domains</span>
<svg style="left:46.6px;top:534.2px" width="5" height="8" viewBox="0 0 5 8"><path d="M0.7 0.5L4 3.9L0.7 7.3" fill="none" stroke="#0a6fd0" stroke-width="1.65"/></svg>
<svg style="left:61.8px;top:531px" width="13" height="11" viewBox="0 0 13 11"><path d="M0 1.6H4.2L5.2 0H12.6V2.2H0Z" fill="#c9a468"/><rect x="0" y="1.8" width="13" height="9" fill="#dcb67a"/></svg>
<span class="t" style="left:82.50px;top:529.54px;letter-spacing:-0.534px;color:#1c1c2c">Event Triggers</span>
<!--/PANEL-->
<!--EDITOR-->
<div class="abs" style="left:297px;top:116px;width:466px;height:27.5px;background:#f5f5f7;border:1px solid #cdd0de;border-bottom:none"></div>
<div class="abs" style="left:418px;top:116px;width:1px;height:27.5px;background:#cdd0de"></div>
<div class="abs" style="left:533px;top:116px;width:1px;height:27.5px;background:#cdd0de"></div>
<div class="abs" style="left:647.5px;top:116px;width:1px;height:27.5px;background:#cdd0de"></div>
<div class="abs" style="left:297px;top:143px;width:700.5px;height:404px;border:1px solid #cdd0de;background:#fff"></div>
<div class="abs" style="left:648.5px;top:142px;width:113.5px;height:2px;background:#f5f5f7"></div>
<svg style="left:307.6px;top:122.6px" width="13.4" height="12.2" viewBox="0 0 13 12"><path d="M10.6 2.6A5.2 5.2 0 1 0 11.6 7.4" fill="none" stroke="#444" stroke-width="1.2"/><path d="M8.4 4.4A2.8 2.8 0 1 0 9 7" fill="none" stroke="#444" stroke-width="1"/><path d="M6.2 4V6.4H8" fill="none" stroke="#444" stroke-width="0.9"/><path d="M9.4 0.6L12.6 1.4L10.6 4Z" fill="#444"/></svg>
<span class="t" style="left:325.00px;top:121.84px;letter-spacing:0.064px;font-weight:bold;color:#444">Start Page</span>
<svg style="left:428.2px;top:121.5px" width="13.5" height="12.8" viewBox="0 0 12 12" preserveAspectRatio="none"><path d="M3.6 8.6V2.2Q3.6 0.7 5.1 0.7H10Q11.3 0.7 11.3 2V3.2H9.2" fill="none" stroke="#222" stroke-width="1.4"/><path d="M8.6 2.4V8.8Q8.6 11 6.4 11H1.8Q0.7 11 0.7 10V9.3H6.2" fill="none" stroke="#222" stroke-width="1.4"/></svg>
<span class="t" style="left:446.25px;top:121.84px;letter-spacing:-0.382px;font-weight:bold;color:#444">SQL3.sql*</span>
<svg style="left:543.2px;top:121.5px" width="13.5" height="12.8" viewBox="0 0 12 12" preserveAspectRatio="none"><path d="M3.6 8.6V2.2Q3.6 0.7 5.1 0.7H10Q11.3 0.7 11.3 2V3.2H9.2" fill="none" stroke="#222" stroke-width="1.4"/><path d="M8.6 2.4V8.8Q8.6 11 6.4 11H1.8Q0.7 11 0.7 10V9.3H6.2" fill="none" stroke="#222" stroke-width="1.4"/></svg>
<span class="t" style="left:561.25px;top:121.84px;letter-spacing:-0.382px;font-weight:bold;color:#444">SQL2.sql*</span>
<svg style="left:658.6px;top:121.5px" width="13.5" height="12.8" viewBox="0 0 12 12" preserveAspectRatio="none"><path d="M3.6 8.6V2.2Q3.6 0.7 5.1 0.7H10Q11.3 0.7 11.3 2V3.2H9.2" fill="none" stroke="#222" stroke-width="1.4"/><path d="M8.6 2.4V8.8Q8.6 11 6.4 11H1.8Q0.7 11 0.7 10V9.3H6.2" fill="none" stroke="#222" stroke-width="1.4"/></svg>
<span class="t" style="left:676.00px;top:121.84px;letter-spacing:-0.299px;font-weight:bold;color:#444">SQL1.sql*</span>
<svg style="left:743px;top:125px" width="10" height="10" viewBox="0 0 10 10"><circle cx="5" cy="5" r="4.8" fill="#555"/><path d="M3.2 3.2L6.8 6.8M6.8 3.2L3.2 6.8" stroke="#f5f5f7" stroke-width="1.3"/></svg>
<svg style="left:978px;top:128px" width="7" height="4" viewBox="0 0 7 4"><path d="M0 0H7L3.5 3.6Z" fill="#555"/></svg>
<div class="abs" style="left:298px;top:144px;width:20.5px;height:358px;background:#f5f5f5"></div>
<div class="abs" style="left:318px;top:144px;width:4px;height:195px;background:#ffff00"></div>
<div class="abs" style="left:335px;top:144px;width:645px;height:15px;background:#e6e6fa"></div>
<div class="abs" style="left:326px;top:155px;width:1px;height:184px;background:#c4c4d2"></div>
<div class="abs" style="left:326px;top:338px;width:4.5px;height:1px;background:#c4c4d2"></div>
<div class="abs" style="left:322px;top:147.5px;width:8.5px;height:8.5px;background:#fff;border:1px solid #b9b9c9"></div>
<div class="abs" style="left:324.2px;top:151.3px;width:4px;height:1px;background:#9a9aa8"></div>
<div class="code" style="top:145.5px"><span class="k">CREATE</span> <span class="g">OR</span> <span class="k">REPLACE FUNCTION</span> public<span class="g">.</span>most_rented_films<span class="g">(</span>start_date <span class="ty">DATE</span><span class="g">,</span> end_date <span class="ty">DATE</span><span class="g">)</span></div>
<div class="code" style="top:160.5px"><span class="k">RETURNS TABLE</span> <span class="g">(</span>film_id <span class="ty">INTEGER</span><span class="g">,</span> title <span class="ty">TEXT</span><span class="g">,</span> rental_count <span class="ty">INTEGER</span><span class="g">)</span> <span class="k">AS</span> <span class="r">$$</span></div>
<div class="code" style="top:175.5px"><span class="r">BEGIN</span></div>
<div class="code" style="top:190.5px"><span class="r">  RETURN QUERY</span></div>
<div class="code" style="top:205.5px"><span class="r">    SELECT f.film_id, f.title, COUNT(r.rental_id) AS rental_count</span></div>
<div class="code" style="top:220.5px"><span class="r">    FROM film AS f</span></div>
<div class="code" style="top:235.5px"><span class="r">    JOIN inventory AS i ON f.film_id = i.film_id</span></div>
<div class="code" style="top:250.5px"><span class="r">    JOIN rental AS r ON i.inventory_id = r.inventory_id</span></div>
<div class="code" style="top:265.5px"><span class="r">    WHERE r.rental_date BETWEEN start_date AND end_date</span></div>
<div class="code" style="top:280.5px"><span class="r">    GROUP BY f.film_id, f.title</span></div>
<div class="code" style="top:295.5px"><span class="r">    ORDER BY rental_count DESC;</span></div>
<div class="code" style="top:310.5px"><span class="r">END;</span></div>
<div class="code" style="top:325.5px"><span class="r">$$</span> <span class="k">LANGUAGE</span> <span class="k2">plpgsql</span><span class="g">;</span></div>
<div class="abs" style="left:980px;top:144px;width:16.5px;height:358px;background:#f5f5f5"></div>
<div class="abs" style="left:980px;top:177px;width:16.5px;height:202px;background:#dddde3"></div>
<div class="abs" style="left:980px;top:143px;width:17.5px;height:16.5px;background:#f7f7f9;border:1px solid #c9cbdb"></div>
<svg style="left:983px;top:146.5px" width="10" height="10" viewBox="0 0 10 10"><rect x="0" y="4.2" width="10" height="1.6" fill="#222"/><path d="M5 0.4L7 2.6H3Z M5 9.6L7 7.4H3Z" fill="#333"/></svg>
<svg style="left:985px;top:166px" width="7" height="5" viewBox="0 0 7 5"><path d="M3.5 0L7 5H0Z" fill="#6a6a6a"/></svg>
<svg style="left:985px;top:491.5px" width="7" height="5" viewBox="0 0 7 5"><path d="M3.5 5L7 0H0Z" fill="#6a6a6a"/></svg>
<div class="abs" style="left:298px;top:502px;width:698.5px;height:17px;background:#f5f5f5"></div>
<div class="abs" style="left:335px;top:502px;width:393px;height:17px;background:#dddde3"></div>
<div class="abs" style="left:297px;top:501.5px;width:21px;height:18px;background:#f7f7f9;border:1px solid #c9cbdb"></div>
<svg style="left:302.5px;top:505.5px" width="10" height="10" viewBox="0 0 10 10"><rect x="4.2" y="0" width="1.6" height="10" fill="#222"/><path d="M0.4 5L2.6 3V7Z M9.6 5L7.4 3V7Z" fill="#333"/></svg>
<svg style="left:324px;top:507px" width="5" height="7" viewBox="0 0 5 7"><path d="M0 3.5L5 0V7Z" fill="#6a6a6a"/></svg>
<svg style="left:968px;top:507px" width="5" height="7" viewBox="0 0 5 7"><path d="M5 3.5L0 0V7Z" fill="#6a6a6a"/></svg>
<div class="abs" style="left:298px;top:519px;width:698.5px;height:27px;background:#eeeef2"></div>
<div class="abs" style="left:298px;top:519px;width:62px;height:27px;background:#d2d2d6"></div>
<svg style="left:306.5px;top:525.5px" width="13.5" height="12.8" viewBox="0 0 12 12" preserveAspectRatio="none"><path d="M3.6 8.6V2.2Q3.6 0.7 5.1 0.7H10Q11.3 0.7 11.3 2V3.2H9.2" fill="none" stroke="#222" stroke-width="1.4"/><path d="M8.6 2.4V8.8Q8.6 11 6.4 11H1.8Q0.7 11 0.7 10V9.3H6.2" fill="none" stroke="#222" stroke-width="1.4"/></svg>
<span class="t" style="left:326.60px;top:524.84px;letter-spacing:0.401px;font-weight:bold;color:#444">Text</span>
<div class="vsep" style="left:363px;top:521px;height:24px;background:#d6d7e0"></div>
<div class="vsep" style="left:430.5px;top:521px;height:24px;background:#d6d7e0"></div>
<div class="vsep" style="left:485.5px;top:521px;height:24px;background:#d6d7e0"></div>
<div class="vsep" style="left:679.5px;top:521px;height:24px;background:#d6d7e0"></div>
<div class="vsep" style="left:762.5px;top:521px;height:24px;background:#d6d7e0"></div>
<div class="vsep" style="left:862px;top:521px;height:24px;background:#d6d7e0"></div>
<div class="vsep" style="left:927.5px;top:521px;height:24px;background:#d6d7e0"></div>
<svg style="left:375px;top:527.5px" width="12" height="11" viewBox="0 0 12 11"><rect x="0.5" y="0.5" width="11" height="10" fill="#fff" stroke="#333" stroke-width="1"/><path d="M0.5 3.9H11.5M0.5 7.1H11.5M4.2 0.5V10.5M7.8 0.5V10.5" stroke="#333" stroke-width="0.9"/></svg>
<span class="t" style="left:393.60px;top:524.84px;letter-spacing:-0.740px;color:#333">Data</span>
<svg style="left:444px;top:528px" width="11" height="10" viewBox="0 0 11 10"><path d="M5.5 0V10M0 5H11" stroke="#222" stroke-width="1.7"/></svg>
<svg style="left:497px;top:526.5px" width="14" height="14" viewBox="0 0 14 14"><circle cx="7" cy="7" r="7" fill="#2f9e3f"/><path d="M3.4 7.2L6 9.8L10.6 4.4" fill="none" stroke="#fff" stroke-width="1.8"/></svg>
<span class="t" style="left:517.00px;top:524.84px;letter-spacing:-0.114px;color:#333">Query executed successfully.</span>
<span class="t" style="left:689.00px;top:524.84px;letter-spacing:-0.640px;color:#333">00:00:00.003</span>
<span class="t" style="left:772.40px;top:524.84px;letter-spacing:-0.172px;color:#333">localhost (14.7)</span>
<span class="t" style="left:872.00px;top:524.84px;letter-spacing:-0.129px;color:#333">postgres</span>
<span class="t" style="left:937.00px;top:524.84px;letter-spacing:-0.089px;color:#333">pagila</span>
<svg style="left:983px;top:532px" width="6" height="3" viewBox="0 0 6 3"><path d="M0 0H6L3 3Z" fill="#8a8a8a"/></svg>
<div class="abs" style="left:0;top:578px;width:1000px;height:28px;background:#f5f5f7"></div>
<svg style="left:16.5px;top:559px" width="14" height="14" viewBox="0 0 14 14"><path d="M9.5 3V0.6H0.6V13.4H9.5V11" fill="none" stroke="#333" stroke-width="1.1"/><path d="M4 6.1H9.2V3.6L13.6 7L9.2 10.4V7.9H4Z" fill="#222"/></svg>
<span class="t" style="left:33.60px;top:558.24px;letter-spacing:-0.355px;color:#333">Output</span>
<svg style="left:98.5px;top:559px" width="13" height="14" viewBox="0 0 13 14"><path d="M1 3.4H3.2M7.4 3.4H9.4V6M1 3.4V13H5.6" fill="none" stroke="#333" stroke-width="1.1"/><path d="M3 3.8V1.8H4.2Q4.2 0.4 5.2 0.4Q6.2 0.4 6.2 1.8H7.4V3.8Z" fill="none" stroke="#333" stroke-width="0.9"/><circle cx="9" cy="10" r="3.8" fill="#e02020"/><path d="M7.4 8.4L10.6 11.6M10.6 8.4L7.4 11.6" stroke="#fff" stroke-width="1.2"/></svg>
<span class="t" style="left:113.40px;top:558.24px;letter-spacing:-0.549px;color:#333">Error List</span>
<svg style="left:988px;top:594px" width="10" height="10" viewBox="0 0 10 10"><g fill="#c4c4cc"><rect x="8" y="0" width="1.5" height="1.5"/><rect x="5" y="3" width="1.5" height="1.5"/><rect x="8" y="3" width="1.5" height="1.5"/><rect x="2" y="6" width="1.5" height="1.5"/><rect x="5" y="6" width="1.5" height="1.5"/><rect x="8" y="6" width="1.5" height="1.5"/></g></svg>
<!--BOTTOM-->
</body></html>
